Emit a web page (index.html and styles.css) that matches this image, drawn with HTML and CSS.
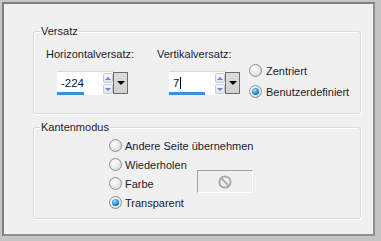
FILE: index.html
```html
<!DOCTYPE html>
<html lang="de">
<head>
  <meta charset="UTF-8">
  <title>Versatz</title>
  <link rel="stylesheet" href="styles.css">
</head>
<body>

  <div class="frame">

    <!-- Versatz -->
    <fieldset class="group group-offset">
      <legend>Versatz</legend>
      <div class="offset-row">
        <div class="offset-col col-h">
          <div class="field-label">Horizontalversatz:</div>
          <div class="spin">
            <div class="spin-field">
              <span class="spin-value">-224</span>
              <span class="spin-level" style="width: 27px"></span>
            </div>
            <div class="spin-arrows">
              <span class="spin-btn"><span class="tri-up"></span></span>
              <span class="spin-btn"><span class="tri-down"></span></span>
            </div>
            <div class="spin-drop"><span class="tri-drop"></span></div>
          </div>
        </div>

        <div class="offset-col col-v">
          <div class="field-label">Vertikalversatz:</div>
          <div class="spin">
            <div class="spin-field">
              <span class="spin-value">7<span class="caret"></span></span>
              <span class="spin-level" style="width: 36px"></span>
            </div>
            <div class="spin-arrows">
              <span class="spin-btn"><span class="tri-up"></span></span>
              <span class="spin-btn"><span class="tri-down"></span></span>
            </div>
            <div class="spin-drop"><span class="tri-drop"></span></div>
          </div>
        </div>

        <div class="offset-modes">
          <div class="radio offset-radio"><span class="radio-dot"></span>Zentriert</div>
          <div class="radio offset-radio is-checked"><span class="radio-dot"></span>Benutzerdefiniert</div>
        </div>
      </div>
    </fieldset>

    <!-- Kantenmodus -->
    <fieldset class="group group-edge">
      <legend>Kantenmodus</legend>
      <div class="edge-list">
        <div class="radio edge-radio"><span class="radio-dot"></span>Andere Seite übernehmen</div>
        <div class="radio edge-radio"><span class="radio-dot"></span>Wiederholen</div>
        <div class="radio edge-radio">
          <span class="radio-dot"></span><span class="color-label">Farbe</span>
          <span class="swatch">
            <svg width="16" height="16" viewBox="0 0 16 16">
              <circle cx="8" cy="8" r="5.6" fill="none" stroke="#adadad" stroke-width="2"/>
              <line x1="4.2" y1="4.2" x2="11.8" y2="11.8" stroke="#adadad" stroke-width="2"/>
            </svg>
          </span>
        </div>
        <div class="radio edge-radio is-checked"><span class="radio-dot"></span>Transparent</div>
      </div>
    </fieldset>

  </div>

</body>
</html>
```

FILE: styles.css
```css
body {
  margin: 0;
  background-color: #c4c4c4;
  font-family: "Liberation Sans", Arial, sans-serif;
  font-size: 11px;
  line-height: 14px;
  color: #1c1c2a;
}

.frame {
  box-sizing: border-box;
  width: 373px;
  height: 234px;
  margin: 2px 0 0 2px;
  padding: 20px 0 0 29px;
  background-color: #f0f0f0;
  border-top: 2px solid #7e7e7e;
  border-left: 2px solid #7e7e7e;
  border-right: 2px solid #8e8e8e;
  border-bottom: 2px solid #8e8e8e;
}

/* Gruppenrahmen */
.group {
  box-sizing: border-box;
  width: 328px;
  margin: 0;
  padding: 0 0 0 6px;
  min-inline-size: 0;
  border: 1px solid #d5dbe0;
  border-radius: 3px;
  box-shadow: inset 1px 1px 0 #fff, 1px 1px 0 #fff;
}

.group legend {
  padding: 0 1px;
  line-height: 14px;
  color: #1c1c2a;
}

.group-offset {
  height: 90px;
  padding-top: 9px;
}

.group-edge {
  height: 99px;
  margin-top: 6px;
  padding-top: 2px;
}

/* Versatz */
.offset-row {
  display: flex;
}

.offset-col {
  display: flex;
  flex-direction: column;
}

.col-h {
  width: 111px;
  margin-left: 6px;
}

.col-h .spin {
  margin-left: 11px;
}

.col-v {
  width: 92px;
}

.col-v .spin {
  margin-left: 12px;
}

.field-label {
  line-height: 14px;
}

.spin {
  display: flex;
  width: 71px;
  height: 24px;
  margin-top: 10px;
}

.spin-field {
  display: flex;
  flex-direction: column;
  width: 46px;
  background-color: #fff;
  border-top: 1px solid #d6d6d6;
}

.spin-value {
  padding: 4px 0 0 4px;
  font-size: 11.5px;
  line-height: 14px;
  color: #10103c;
}

.caret {
  display: inline-block;
  width: 1px;
  height: 12px;
  margin-left: 1px;
  vertical-align: -2px;
  background-color: #000;
}

.spin-level {
  height: 3px;
  margin-top: auto;
  background-color: #3b8ee4;
}

.spin-arrows {
  display: flex;
  flex-direction: column;
  gap: 1px;
  width: 10px;
  padding-top: 1px;
  background-color: #fff;
  border-top: 1px solid #d6d6d6;
}

.spin-btn {
  box-sizing: border-box;
  display: flex;
  align-items: center;
  justify-content: center;
  width: 10px;
  height: 10px;
  border: 1px solid #c2cadb;
  border-radius: 2px;
  background: linear-gradient(#f6f8fc, #e0e5f0);
}

.tri-up {
  border-left: 3px solid transparent;
  border-right: 3px solid transparent;
  border-bottom: 3px solid #6f80d8;
}

.tri-down {
  border-left: 3px solid transparent;
  border-right: 3px solid transparent;
  border-top: 3px solid #6f80d8;
}

.spin-drop {
  box-sizing: border-box;
  display: flex;
  align-items: center;
  justify-content: center;
  width: 15px;
  height: 22px;
  margin-top: 1px;
  border: 1px solid #6c6c6c;
  background: linear-gradient(#dedede, #cfcfcf);
}

.tri-drop {
  border-left: 4px solid transparent;
  border-right: 4px solid transparent;
  border-top: 4px solid #000;
}

.offset-modes {
  display: flex;
  flex-direction: column;
  margin-top: 13px;
}

/* Optionsfelder */
.radio {
  display: flex;
  align-items: center;
  gap: 3px;
  white-space: nowrap;
}

.offset-radio {
  height: 21px;
}

.edge-radio {
  height: 19px;
}

.radio-dot {
  box-sizing: border-box;
  display: flex;
  align-items: center;
  justify-content: center;
  width: 13px;
  height: 13px;
  border: 1px solid #8f8f8f;
  border-radius: 50%;
  background: radial-gradient(circle at 40% 35%, #ffffff 0, #e6e6e6 55%, #cfcfcf 100%);
  flex-shrink: 0;
}

.is-checked .radio-dot::after {
  content: "";
  width: 7px;
  height: 7px;
  border-radius: 50%;
  background: radial-gradient(circle at 40% 35%, #a6e6ff 0, #2f95d8 45%, #0b4f8c 100%);
}

.offset-radio .radio-dot {
  margin-right: 1px;
}

.edge-list {
  display: flex;
  flex-direction: column;
  margin-left: 69px;
}

.color-label {
  width: 69px;
}

.swatch {
  box-sizing: border-box;
  display: flex;
  align-items: center;
  justify-content: center;
  width: 56px;
  height: 23px;
  margin-bottom: 4px;
  border-top: 1px solid #a0a0a0;
  border-left: 1px solid #a0a0a0;
  border-right: 1px solid #fff;
  border-bottom: 1px solid #fff;
  background-color: #f0f0f0;
}
```
